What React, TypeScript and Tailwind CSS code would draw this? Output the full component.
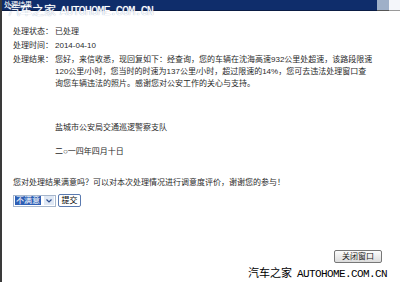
export default function App() {
  return (
    <div className="relative w-[400px] h-[282px] overflow-hidden bg-white border-l-2 border-[#3a3a3a] text-[8px] text-[#2a2a2a] font-['Liberation_Sans','Noto_Sans_CJK_SC',sans-serif]">
      {/* title bar */}
      <div className="flex h-[11px] items-stretch">
        <div className="flex-1 bg-[#0f2d6b] border-b border-[#0a1c44] pl-[2px] text-[7px] leading-[10px] text-white">处理结果</div>
        <div className="w-[12px] bg-[#9fb0c8] border-b border-[#555]" />
        <div className="w-[11px] border-b border-[#9a9a9a] bg-[#f4f6fa]" />
      </div>

      {/* watermark on top */}
      <div className="absolute left-[6px] top-[2px] flex items-baseline gap-[4px] text-[12px] leading-[15px] text-white [text-shadow:0_0_1px_#8899bb]">
        <span className="font-['Noto_Sans_CJK_SC',sans-serif]">汽车之家</span>
        <span className="font-['Liberation_Mono',monospace] tracking-[-1px]">AUTOHOME.COM.CN</span>
      </div>

      <div className="pl-[11px] pt-[15px]">
        <div className="flex leading-[12px]">
          <span className="w-[42px]">处理状态：</span>
          <span>已处理</span>
        </div>
        <div className="flex leading-[12px] mt-[2px]">
          <span className="w-[42px]">处理时间：</span>
          <span>2014-04-10</span>
        </div>
        <div className="flex leading-[12px] mt-[2px]">
          <span className="w-[42px] shrink-0">处理结果：</span>
          <div className="whitespace-nowrap">
            <div>您好，来信收悉，现回复如下：经查询，您的车辆在沈海高速932公里处超速，该路段限速</div>
            <div>120公里/小时，您当时的时速为137公里/小时，超过限速的14%，您可去违法处理窗口查</div>
            <div>询您车辆违法的照片。感谢您对公安工作的关心与支持。</div>
            <div className="mt-[32px]">盐城市公安局交通巡逻警察支队</div>
            <div className="mt-[12px]">二○一四年四月十日</div>
          </div>
        </div>

        <div className="mt-[19px] leading-[12px]">您对处理结果满意吗？可以对本次处理情况进行调意度评价，谢谢您的参与！</div>

        <div className="mt-[5px] flex items-center gap-[2px]">
          <div className="flex h-[12px] w-[43px] items-center border border-[#a6b6cc] bg-white px-[1px]">
            <span className="bg-[#2f5fb5] px-[1px] text-white leading-[9px]">不满意</span>
            <span className="ml-auto flex h-[9px] w-[10px] items-center justify-center bg-[#dfe8f5]">
              <svg width="6" height="4" viewBox="0 0 6 4"><path d="M0.5 0.5 L3 3 L5.5 0.5" stroke="#2f4f8f" strokeWidth="1.2" fill="none" /></svg>
            </span>
          </div>
          <button className="h-[13px] w-[23px] rounded-[2px] border border-[#5a7ab0] bg-white text-[8px] leading-[10px] text-black">提交</button>
        </div>
      </div>

      {/* close button */}
      <button className="absolute left-[332px] top-[250px] h-[13px] w-[48px] rounded-[2px] border border-[#777] bg-gradient-to-b from-[#fdfdfd] to-[#dcdcdc] text-[8px] leading-[10px] text-[#222]">关闭窗口</button>

      {/* bottom watermark */}
      <div className="absolute left-[246px] top-[265px] flex items-baseline gap-[5px] leading-[15px] text-black [text-shadow:0_0_2px_#fff]">
        <span className="font-['Noto_Sans_CJK_SC',sans-serif] text-[11px]">汽车之家</span>
        <span className="font-['Liberation_Mono',monospace] text-[11px] tracking-[-0.6px]">AUTOHOME.COM.CN</span>
      </div>
    </div>
  )
}
